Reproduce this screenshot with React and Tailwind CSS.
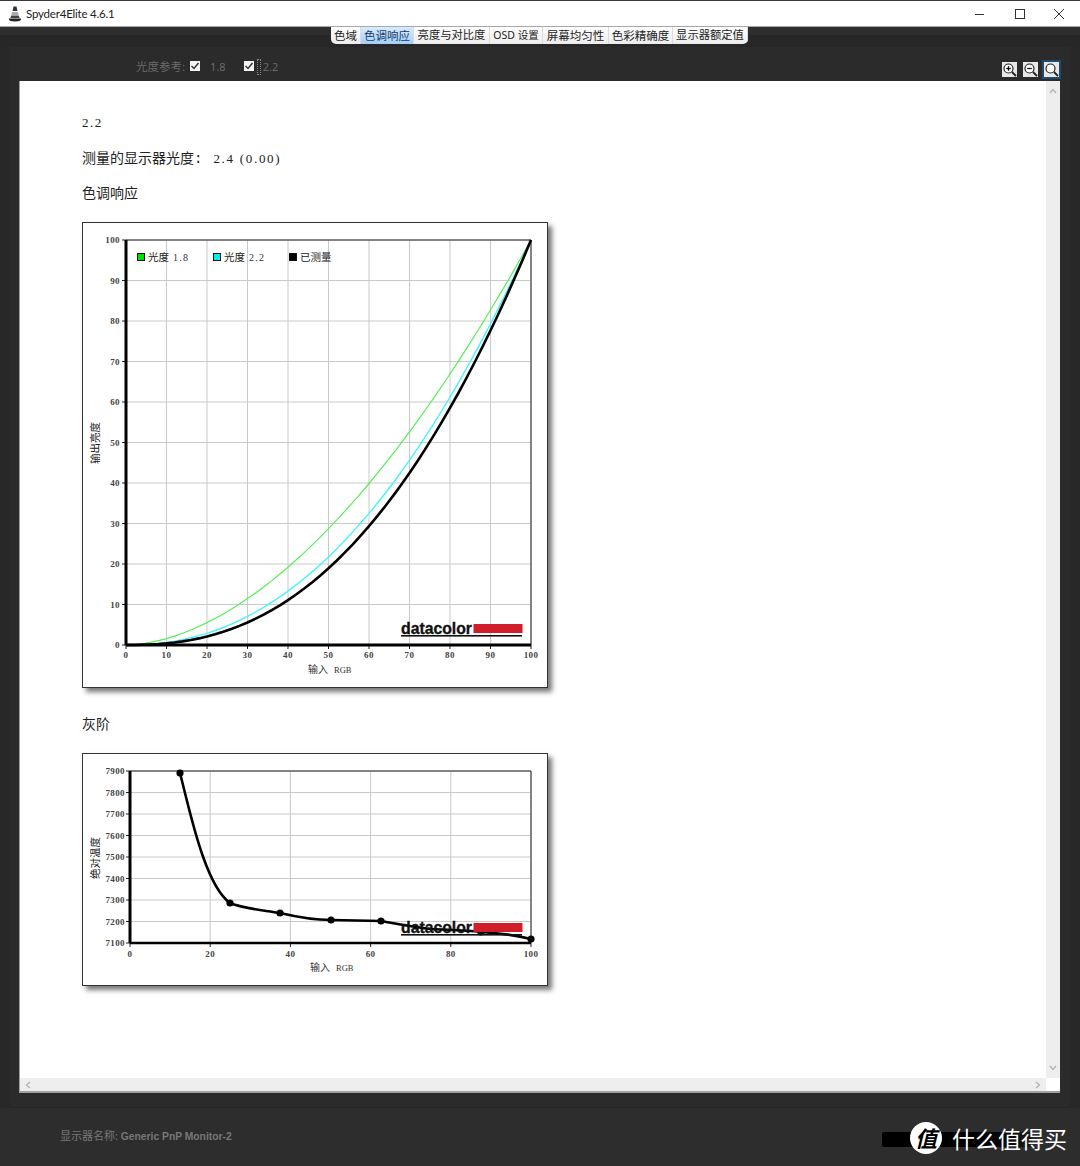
import React from 'react';

const TABS = [
  { label: '色域', cls: 'w-[30px]' },
  { label: '色调响应', cls: 'w-[53px] bg-gradient-to-b from-[#d8ecfd] to-[#a0cff9] text-[#1a3a66]' },
  { label: '亮度与对比度', cls: 'w-[76px] text-[11.3px]' },
  { label: 'OSD 设置', cls: 'w-[53px] text-[10.5px]' },
  { label: '屏幕均匀性', cls: 'w-[66px]' },
  { label: '色彩精确度', cls: 'w-[64px]' },
  { label: '显示器额定值', cls: 'w-[75px] text-[11.3px]' },
];

const AXIS_FONT = '"Liberation Serif", serif';
const LABEL_FONT = '"Liberation Mono", "Noto Sans CJK SC", monospace';

function gammaPath(g, x0, y0, size) {
  let d = '';
  for (let i = 0; i <= 100; i += 2) {
    const px = x0 + (i / 100) * size;
    const py = y0 + size - Math.pow(i / 100, g) * size;
    d += (i === 0 ? 'M' : 'L') + px.toFixed(1) + ' ' + py.toFixed(1) + ' ';
  }
  return d;
}

function Logo({ x, y }) {
  return (
    <g>
      <text x={x} y={y + 9} textLength="71" lengthAdjust="spacingAndGlyphs" fontSize="16.5" fontWeight="700" fill="#111" stroke="#111" strokeWidth="0.35" fontFamily='"Liberation Sans", sans-serif'>datacolor</text>
      <rect x={x + 72.5} y={y - 1} width="49" height="9" fill="#d01f2b" />
      <rect x={x} y={y + 10} width="121" height="1.6" fill="#111" />
    </g>
  );
}

function AxisTitle({ x, y }) {
  return (
    <text x={x} y={y} fontSize="10" fill="#333" fontFamily={LABEL_FONT}>
      输入
      <tspan dx="6" fontSize="8.5" fontFamily={AXIS_FONT}>RGB</tspan>
    </text>
  );
}

function LegendItem({ x, color, name, value }) {
  return (
    <g>
      <rect x={x + 0.5} y="30.5" width="7" height="7" fill={color} stroke="#111" />
      <text x={x + 11} y="38" fontSize="10.5" fill="#222" fontFamily={LABEL_FONT}>
        {name}
        {value && <tspan dx="4" fontSize="10" letterSpacing="1.2" fill="#334" fontFamily={AXIS_FONT}>{value}</tspan>}
      </text>
    </g>
  );
}

function ToneChart() {
  const x0 = 43, y0 = 17, size = 405;
  const ticks = [0, 10, 20, 30, 40, 50, 60, 70, 80, 90, 100];
  return (
    <svg width="464" height="464" className="block">
      {ticks.map((t) => {
        const px = x0 + t * 4.05;
        const py = y0 + size - t * 4.05;
        return (
          <g key={t}>
            <line x1={px} y1={y0} x2={px} y2={y0 + size} stroke="#c9c9c9" />
            <line x1={x0} y1={py} x2={x0 + size} y2={py} stroke="#c9c9c9" />
            <line x1={x0 - 4} y1={py} x2={x0} y2={py} stroke="#222" />
            <line x1={px} y1={y0 + size} x2={px} y2={y0 + size + 4} stroke="#222" />
            <text x={x0 - 6} y={py + 3} textAnchor="end" fontSize="9" fontWeight="700" letterSpacing="0.4" fill="#444" fontFamily={AXIS_FONT}>{t}</text>
            <text x={px} y={y0 + size + 13} textAnchor="middle" fontSize="9" fontWeight="700" letterSpacing="0.4" fill="#444" fontFamily={AXIS_FONT}>{t}</text>
          </g>
        );
      })}
      <path d={`M${x0} ${y0} H${x0 + size} V${y0 + size}`} fill="none" stroke="#222" />
      <path d={gammaPath(1.8, x0, y0, size)} fill="none" stroke="#55ee55" strokeWidth="1.2" />
      <path d={gammaPath(2.2, x0, y0, size)} fill="none" stroke="#44f4ff" strokeWidth="1.4" />
      <path d={gammaPath(2.4, x0, y0, size)} fill="none" stroke="#000" strokeWidth="2.6" />
      <line x1={x0} y1={y0} x2={x0} y2={y0 + size} stroke="#000" strokeWidth="3" />
      <line x1={x0} y1={y0 + size} x2={x0 + size} y2={y0 + size} stroke="#000" strokeWidth="3" />

      <LegendItem x={54} color="#00dd00" name="光度" value="1.8" />
      <LegendItem x={130} color="#00f0f0" name="光度" value="2.2" />
      <LegendItem x={206} color="#000" name="已测量" />

      <AxisTitle x={225} y={450} />
      <text transform="translate(16 220) rotate(-90)" textAnchor="middle" fontSize="10.5" fill="#222" fontFamily={LABEL_FONT}>输出亮度</text>
      <Logo x={318} y={402} />
    </svg>
  );
}

const TEMP_DOTS = [[180, 773], [230, 903], [280, 913], [331, 920], [381, 921], [481, 932], [531, 939]];

function TempChart() {
  const x0 = 47, y0 = 17, w = 401, h = 172;
  const ys = [7900, 7800, 7700, 7600, 7500, 7400, 7300, 7200, 7100];
  const xs = [0, 20, 40, 60, 80, 100];
  return (
    <svg width="464" height="231" className="block">
      {ys.map((t) => {
        const py = y0 + ((7900 - t) / 800) * h;
        return (
          <g key={t}>
            <line x1={x0} y1={py} x2={x0 + w} y2={py} stroke="#c9c9c9" />
            <line x1={x0 - 4} y1={py} x2={x0} y2={py} stroke="#222" />
            <text x={x0 - 5} y={py + 3} textAnchor="end" fontSize="9" fontWeight="700" letterSpacing="0.4" fill="#444" fontFamily={AXIS_FONT}>{t}</text>
          </g>
        );
      })}
      {xs.map((t) => {
        const px = x0 + (t / 100) * w;
        return (
          <g key={t}>
            <line x1={px} y1={y0} x2={px} y2={y0 + h} stroke="#c9c9c9" />
            <line x1={px} y1={y0 + h} x2={px} y2={y0 + h + 4} stroke="#222" />
            <text x={px} y={y0 + h + 14} textAnchor="middle" fontSize="9" fontWeight="700" letterSpacing="0.4" fill="#444" fontFamily={AXIS_FONT}>{t}</text>
          </g>
        );
      })}
      <path d={`M${x0} ${y0} H${x0 + w} V${y0 + h}`} fill="none" stroke="#222" />
      <line x1={x0} y1={y0} x2={x0} y2={y0 + h} stroke="#000" strokeWidth="3" />
      <line x1={x0} y1={y0 + h} x2={x0 + w} y2={y0 + h} stroke="#000" strokeWidth="2.5" />
      <g transform="translate(-83 -754)">
        <path
          d="M180 773 C190 812 205 885 230 903 C245 909 262 910 280 913 C297 917 314 920 331 920 L381 921 C398 924 414 927 431 929 C448 930 464 930 481 932 C498 933 515 935 531 939"
          fill="none"
          stroke="#000"
          strokeWidth="2.6"
        />
        {TEMP_DOTS.map(([cx, cy]) => <circle key={cx} cx={cx} cy={cy} r="3.6" fill="#000" />)}
      </g>
      <Logo x={318} y={170} />
      <AxisTitle x={227} y={217} />
      <text transform="translate(16 104) rotate(-90)" textAnchor="middle" fontSize="10.5" fill="#222" fontFamily={LABEL_FONT}>绝对温度</text>
    </svg>
  );
}

function CheckBox() {
  return (
    <span className="flex h-[10px] w-[10px] items-center justify-center bg-[#f4f4f4]">
      <svg width="10" height="10" viewBox="0 0 10 10">
        <path d="M1.5 5 L4 7.5 L8.5 2" fill="none" stroke="#333" strokeWidth="1.5" />
      </svg>
    </span>
  );
}

function ZoomIcon({ kind, selected }) {
  return (
    <span className={`flex h-[15px] w-[15px] items-center justify-center bg-[#e8e8e8] ${selected ? 'outline-2 outline-[#1f4a70]' : ''}`}>
      <svg width="15" height="15" viewBox="0 0 15 15">
        <circle cx="6.5" cy="6.5" r="4.5" fill="#fff" stroke="#222" strokeWidth="1.2" />
        <line x1="10" y1="10" x2="14" y2="14" stroke="#222" strokeWidth="1.8" />
        {kind !== 'fit' && <line x1="4.2" y1="6.5" x2="8.8" y2="6.5" stroke="#111" strokeWidth="1.3" />}
        {kind === 'in' && <line x1="6.5" y1="4.2" x2="6.5" y2="8.8" stroke="#111" strokeWidth="1.3" />}
      </svg>
    </span>
  );
}

function Chevron({ d }) {
  return (
    <svg width="8" height="8" viewBox="0 0 8 8">
      <path d={d} fill="none" stroke="#b4b4b4" strokeWidth="1.4" />
    </svg>
  );
}

export default function App() {
  return (
    <div className="relative flex h-[1166px] w-[1080px] flex-col overflow-hidden bg-[#282828]" style={{ fontFamily: '"Noto Sans", "Noto Sans CJK SC", sans-serif' }}>
      {/* title bar */}
      <div className="flex h-[27px] shrink-0 items-center border-t border-b border-t-[#3a3a3a] border-b-[#a8a8a8] bg-white">
        <svg width="14" height="16" viewBox="0 0 14 16" className="ml-[8px]">
          <path d="M5.5 0.5 H8.5 L9.5 5 H4.5 Z" fill="#333" />
          <path d="M4 6 H10 L10.6 9 H3.4 Z" fill="#aaa" />
          <path d="M3.2 9.5 H10.8 L11.6 12 H2.4 Z" fill="#444" />
          <path d="M1 12.5 H13 Q14 15.5 7 15.5 Q0 15.5 1 12.5 Z" fill="#222" />
        </svg>
        <span className="ml-[4px] text-[11.5px] tracking-[-0.2px] text-[#222]" style={{ fontFamily: 'Lato, sans-serif' }}>Spyder4Elite 4.6.1</span>
        <div className="ml-auto flex items-center">
          <svg width="12" height="12" viewBox="0 0 12 12" className="mr-[28px]"><line x1="1" y1="6.5" x2="10" y2="6.5" stroke="#333" /></svg>
          <svg width="12" height="12" viewBox="0 0 12 12" className="mr-[27px]"><rect x="1.5" y="1.5" width="9" height="9" fill="none" stroke="#333" /></svg>
          <svg width="12" height="12" viewBox="0 0 12 12" className="mr-[15px]"><path d="M1 1 L11 11 M11 1 L1 11" fill="none" stroke="#333" /></svg>
        </div>
      </div>

      {/* tabs lie over the frame */}
      <div className="absolute left-[331px] top-[27px] flex h-[17px] items-center overflow-hidden rounded-b-[5px] bg-gradient-to-b from-white to-[#ececec] text-[11.5px] text-[#222]">
        {TABS.map((tab) => (
          <span key={tab.label} className={`flex h-full items-center justify-center whitespace-nowrap border-r border-[#dcdcdc] ${tab.cls}`}>
            {tab.label}
          </span>
        ))}
      </div>

      <div className="h-[8px] shrink-0 bg-[#2e2e2e]" />
      <div className="h-[12px] shrink-0 bg-[#272727]" />

      <div className="ml-[10px] mr-[10px] flex h-[1061px] shrink-0 flex-col rounded-b-[4px] border-b border-[#262626] bg-[#2b2b2b] pl-[9px] pr-[10px]">
        {/* reference row */}
        <div className="flex h-[34px] shrink-0 items-center pt-[5px] text-[11.5px] text-[#6a6a6a]">
          <span className="ml-[117px]">光度参考:</span>
          <span className="ml-[5px] -mt-[2px]"><CheckBox /></span>
          <span className="ml-[10px] mt-[2px] text-[11px]">1.8</span>
          <span className="ml-[18px] -mt-[2px]"><CheckBox /></span>
          <span className="ml-[3px] h-[16px] w-[4px] border border-dotted border-[#888]" />
          <span className="ml-[2px] mt-[2px] text-[11px]">2.2</span>
          <div className="ml-auto mr-[1px] flex items-center gap-[6px] mt-[6px]">
            <ZoomIcon kind="in" />
            <ZoomIcon kind="out" />
            <ZoomIcon kind="fit" selected />
          </div>
        </div>

        {/* report page */}
        <div className="flex h-[1012px] shrink-0 flex-col border-b-2 border-l border-[#a0a0a0] bg-white">
          <div className="flex min-h-0 flex-1">
            <div className="flex-1 pl-[62px] pt-[32px] text-[14px] leading-[20px] text-[#222]" style={{ fontFamily: '"Liberation Mono", "Noto Sans CJK SC", monospace' }}>
              <p className="font-['Liberation_Serif'] text-[13px] tracking-[1.5px]">2.2</p>
              <p className="mt-[16px] whitespace-pre">测量的显示器光度:<span className="ml-[11px] font-['Liberation_Serif'] text-[13px] tracking-[1.7px]">2.4 (0.00)</span></p>
              <p className="mt-[15px]">色调响应</p>
              <div className="mt-[18px] w-[466px] border border-[#333] bg-white shadow-[4px_4px_5px_#777]">
                <ToneChart />
              </div>
              <p className="mt-[27px]">灰阶</p>
              <div className="mt-[18px] w-[466px] border border-[#333] bg-white shadow-[4px_4px_5px_#777]">
                <TempChart />
              </div>
            </div>
            <div className="flex w-[14px] shrink-0 flex-col items-center justify-between bg-[#eeeeee] py-[6px]">
              <Chevron d="M1 6 L4 2.5 L7 6" />
              <Chevron d="M1 2 L4 5.5 L7 2" />
            </div>
          </div>
          <div className="flex h-[13px] shrink-0">
            <div className="flex flex-1 items-center justify-between bg-[#eeeeee] px-[4px]">
              <Chevron d="M6 1 L2.5 4 L6 7" />
              <Chevron d="M2 1 L5.5 4 L2 7" />
            </div>
            <div className="w-[14px] bg-white" />
          </div>
        </div>
      </div>

      {/* status line */}
      <div className="flex flex-1 items-center bg-[#2d2d2d] pb-[2px] pl-[60px] text-[11px] text-[#787878]">
        <span>显示器名称: <b className="text-[10.3px]" style={{ fontFamily: '"Liberation Sans", sans-serif' }}>Generic PnP Monitor-2</b></span>
      </div>

      {/* watermark sits on top of the status line */}
      <div className="absolute left-[882px] top-[1132px] h-[15px] w-[150px] rounded-[2px] bg-gradient-to-r from-black via-black to-[#1a1a1a]" />
      <div className="absolute left-[910px] top-[1122px] flex h-[32px] w-[32px] items-center justify-center rounded-full bg-white text-[22px] font-bold italic leading-none text-black">值</div>
      <span className="absolute left-[952px] top-[1122px] whitespace-nowrap text-[23px] leading-[34px] text-white">什么值得买</span>
    </div>
  );
}
